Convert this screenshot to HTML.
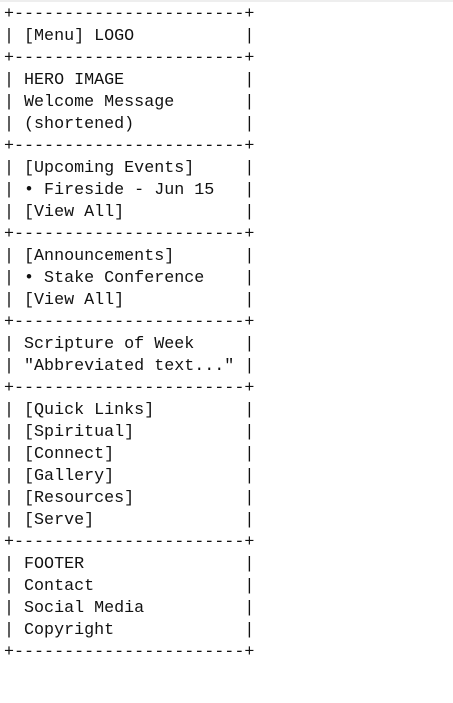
<!DOCTYPE html>
<html><head><meta charset="utf-8"><style>
html,body{margin:0;padding:0;background:#fff;width:453px;height:703px;overflow:hidden}
.bar{position:absolute;left:0;top:0;width:453px;height:2px;background:#eeeeee}
pre{position:absolute;left:4px;top:4px;margin:0;font-family:"Liberation Mono",monospace;font-size:16.7px;line-height:22px;color:#111}
</style></head><body><div class="bar"></div><pre>+-----------------------+
| [Menu] LOGO           |
+-----------------------+
| HERO IMAGE            |
| Welcome Message       |
| (shortened)           |
+-----------------------+
| [Upcoming Events]     |
| • Fireside - Jun 15   |
| [View All]            |
+-----------------------+
| [Announcements]       |
| • Stake Conference    |
| [View All]            |
+-----------------------+
| Scripture of Week     |
| "Abbreviated text..." |
+-----------------------+
| [Quick Links]         |
| [Spiritual]           |
| [Connect]             |
| [Gallery]             |
| [Resources]           |
| [Serve]               |
+-----------------------+
| FOOTER                |
| Contact               |
| Social Media          |
| Copyright             |
+-----------------------+</pre></body></html>
